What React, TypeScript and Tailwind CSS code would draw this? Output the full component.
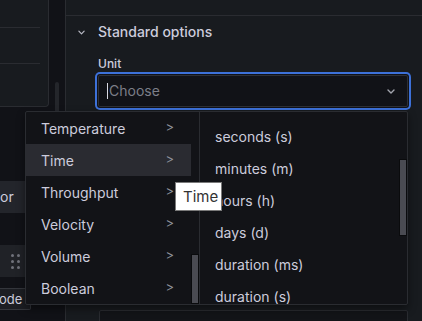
import React from "react";

const leftItems = ["Temperature", "Time", "Throughput", "Velocity", "Volume", "Boolean"];
const rightItems = ["seconds (s)", "minutes (m)", "hours (h)", "days (d)", "duration (ms)", "duration (s)"];

function ChevronDown({ className }: { className?: string }) {
  return (
    <svg className={className} viewBox="0 0 8 5" fill="none">
      <path d="M1 1l3 3 3-3" stroke="currentColor" strokeWidth="1.4" strokeLinecap="round" strokeLinejoin="round" />
    </svg>
  );
}

export default function App() {
  return (
    <div className="relative w-[422px] h-[321px] overflow-hidden bg-[#111217] font-['Inter',sans-serif] text-[#ccccdc] flex">
      {/* left column */}
      <div className="w-[49px] flex flex-col shrink-0">
        <div className="h-[107px] shrink-0 bg-[#181b1f] border-r border-b border-[#2a2c31] rounded-br-[4px] flex flex-col">
          <div className="h-[28px] w-[40px] border-b border-[#2a2c31]" />
          <div className="h-[36px] w-[40px] border-b border-[#2a2c31]" />
        </div>
        <div className="mt-[74px] shrink-0 h-[32px] w-[40px] bg-[#23252b] flex items-center text-[14px] leading-none">
          <span>or</span>
        </div>
        <div className="mt-[32px] shrink-0 h-[32px] w-[40px] bg-[#202227] flex items-center pl-[11px]">
          <div className="grid grid-cols-2 gap-x-[3px] gap-y-[3px]">
            {[0, 1, 2, 3, 4, 5].map((i) => (
              <div key={i} className="w-[3px] h-[3px] rounded-full bg-[#70727b]" />
            ))}
          </div>
        </div>
        <div className="mt-[11px] shrink-0 h-[22px] w-[31px] bg-[#1c1e23] border border-l-0 border-[#34363c] rounded-r-[2px] flex items-center text-[13px] leading-none">
          <span className="-ml-[1px]">ode</span>
        </div>
      </div>
      {/* gap with scrollbar */}
      <div className="w-[16px] shrink-0 pt-[82px] pl-[6px]">
        <div className="w-[4px] h-[40px] rounded-full bg-[#24262b]" />
      </div>
      {/* right panel */}
      <div className="flex-1 bg-[#181b1f] border-l border-[#2a2c31] flex flex-col overflow-hidden">
        <div className="h-[16px] border-b border-[#2a2c31] shrink-0" />
        <div className="h-[32px] shrink-0 flex items-center pl-[12px]">
          <ChevronDown className="w-[7px] h-[5px] text-[#b8bac4]" />
          <span className="ml-[13px] text-[14px] font-medium leading-none">Standard options</span>
        </div>
        <div className="mt-[8px] shrink-0 pl-[32px] text-[12px] font-medium leading-[16px]">Unit</div>
        <div className="mt-[3px] shrink-0 ml-[32px] w-[310px] h-[32px] bg-[#111217] border border-[#2e3036] rounded-[2px] shadow-[0_0_0_1px_#111217,0_0_0_3px_#3d71d9] flex items-center pl-[8px] pr-[12px]">
          <div className="w-[1px] h-[16px] bg-[#d8d8e2]" />
          <span className="ml-[1px] text-[14px] text-[#7c7e88] leading-none">Choose</span>
          <ChevronDown className="ml-auto w-[8px] h-[5px] text-[#a3a5ae]" />
        </div>
        <div className="mt-[203px] shrink-0 ml-[33px] w-[309px] h-[20px] bg-[#131418] border border-[#2a2c31] rounded-[2px]" />
      </div>

      {/* dropdown menu */}
      <div className="absolute left-[25px] top-[111px] w-[383px] h-[194px] bg-[#121317] border border-[#2a2c31] rounded-[2px] shadow-[0_4px_8px_rgba(0,0,0,0.45)] flex">
        <div className="relative w-[174px] h-full border-r border-[#2a2c31]">
          <div className="w-[165px] flex flex-col">
            {leftItems.map((t) => (
              <div
                key={t}
                className={`h-[32px] flex items-center justify-between pl-[15px] pr-[17px] text-[14px] ${t === "Time" ? "bg-[#2a2b31]" : ""}`}
              >
                <span>{t}</span>
                <span className="text-[#8f919b] text-[13px]">&gt;</span>
              </div>
            ))}
          </div>
          <div className="absolute right-0 top-[142px] w-[8px] h-[50px] bg-[#4a4b52] border border-[#0a0b0d]" />
        </div>
        <div className="relative flex-1 h-full overflow-hidden">
          <div className="w-[199px] pt-[8px] flex flex-col">
            {rightItems.map((t) => (
              <div key={t} className="h-[32px] shrink-0 flex items-center pl-[15px] text-[14px]">
                {t}
              </div>
            ))}
          </div>
          <div className="absolute right-0 top-[47px] w-[8px] h-[77px] bg-[#4a4b52] border border-[#0a0b0d]" />
        </div>
      </div>

      {/* tooltip */}
      <div className="absolute left-[175px] top-[182px] w-[47px] h-[29px] bg-white border border-[#7a7a7a] flex items-center pl-[7px] text-[15px] text-[#333333] leading-none">
        Time
      </div>
    </div>
  );
}
